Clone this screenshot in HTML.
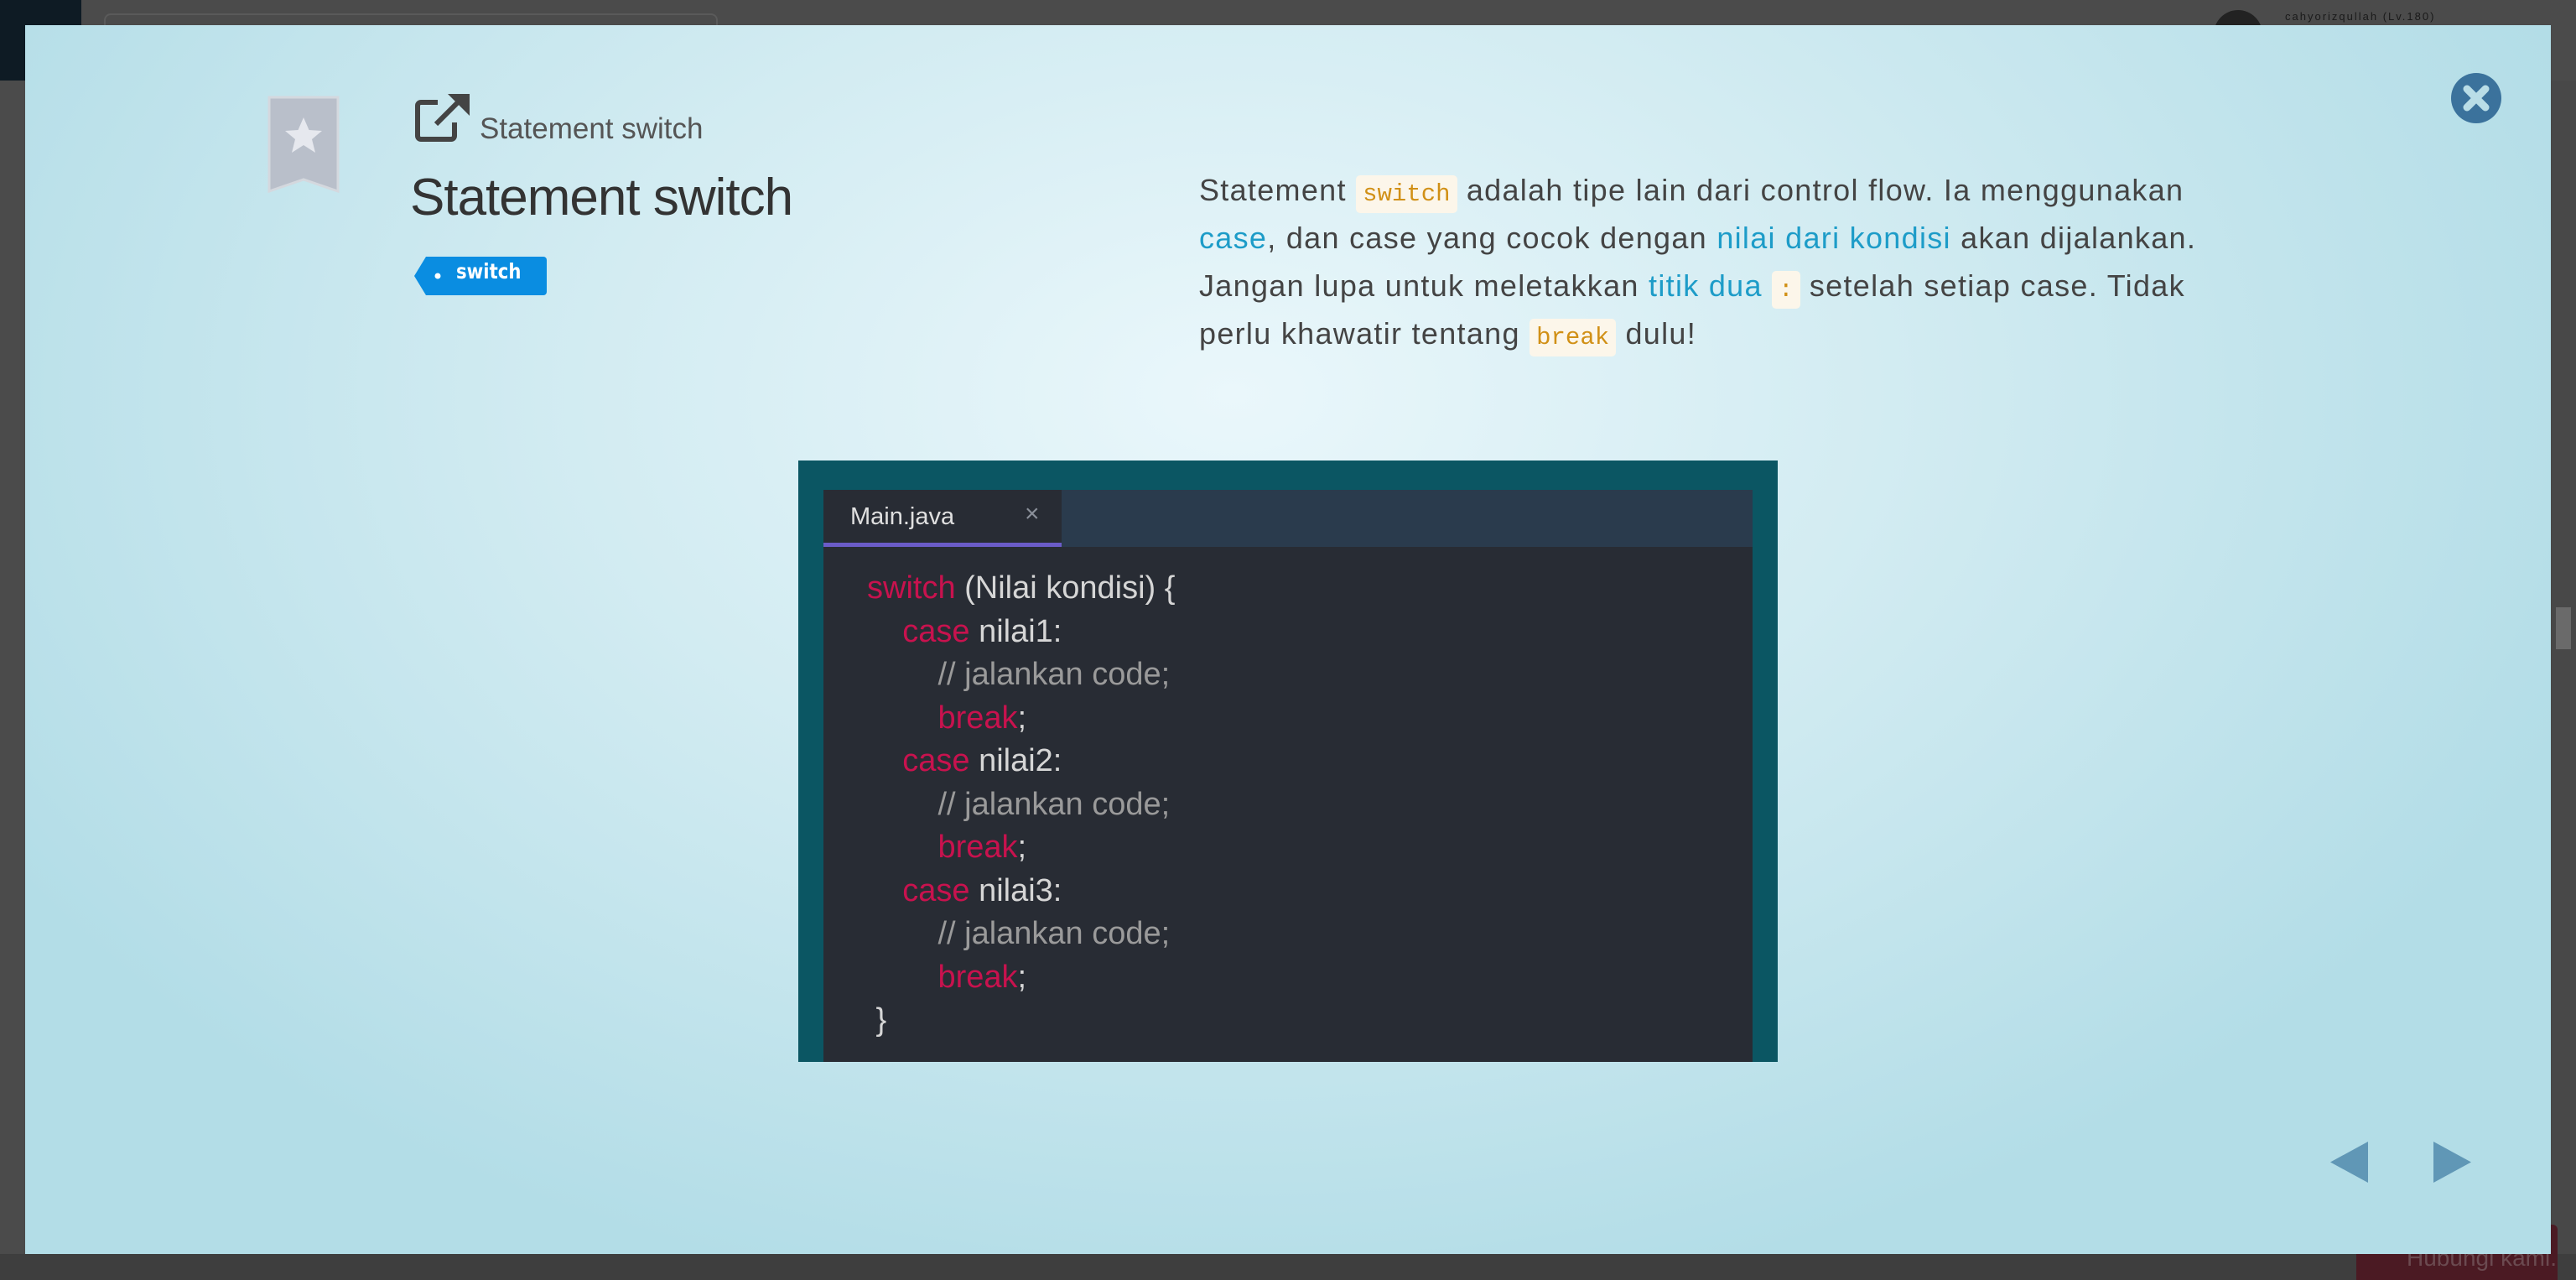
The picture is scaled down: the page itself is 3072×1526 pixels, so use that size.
<!DOCTYPE html>
<html><head><meta charset="utf-8"><style>
*{margin:0;padding:0;box-sizing:border-box}
html,body{width:3072px;height:1526px;overflow:hidden;background:#4b4b4b;font-family:"Liberation Sans",sans-serif}
.abs{position:absolute}
#modal{left:30px;top:30px;width:3012px;height:1465px;background:radial-gradient(ellipse 1700px 1100px at 1440px 440px,#eaf7fb 0%,#d3ecf2 45%,#b3dde7 100%);overflow:hidden}
.code{font-family:"Liberation Sans",sans-serif;font-size:38px;color:#d6d6d6;position:absolute;white-space:pre}
.kw{color:#c8124e}
.cm{color:#9a9a9a}
p.t{font-size:36px;color:#444;line-height:57px;letter-spacing:1.3px;white-space:nowrap}
.ic{font-family:"Liberation Mono",monospace;font-size:29px;line-height:1;color:#d19016;background:#fcf6ea;border-radius:5px;padding:6px 8px;letter-spacing:0}
.lk{color:#1d9cc8}
</style></head><body>
<div class="abs" style="left:0;top:0;width:97px;height:96px;background:#0e1b24"></div>
<div class="abs" style="left:124px;top:16px;width:732px;height:20px;border:2px solid #5a5a5a;border-bottom:none;border-radius:8px 8px 0 0"></div>
<div class="abs" style="left:2640px;top:12px;width:58px;height:58px;border-radius:50%;background:#222"></div>
<div class="abs" style="left:2725px;top:12px;font-size:13px;letter-spacing:2px;color:#1a1a1a">cahyorizqullah (Lv.180)</div>
<div class="abs" style="left:3042px;top:96px;width:30px;height:1430px;background:#484848"></div>
<div class="abs" style="left:3048px;top:724px;width:18px;height:50px;background:#6a6a6a"></div>
<div class="abs" style="left:0;top:1495px;width:3072px;height:31px;background:#3e3e3e"></div>
<div class="abs" style="left:2810px;top:1460px;width:240px;height:66px;background:#4b1a23;border-radius:6px 6px 0 0;color:#6b4a50;font-size:28px;padding:24px 0 0 60px;white-space:nowrap;overflow:hidden">Hubungi kami.</div>

<div id="modal" class="abs">
 <svg class="abs" style="left:289px;top:84px" width="86" height="116" viewBox="0 0 86 116">
  <path d="M2 2H84V114L43 100L2 114Z" fill="#b9bfca" stroke="#d4d8de" stroke-width="3"/>
  <path d="M43 26L49.5 41L65 42L53 52L57 68L43 59L29 68L33 52L21 42L36.5 41Z" fill="#e6e8ee"/>
 </svg>
 <svg class="abs" style="left:464px;top:80px" width="70" height="60" viewBox="0 0 70 60">
  <path d="M28 12H8a4 4 0 0 0-4 4v36a4 4 0 0 0 4 4h36a4 4 0 0 0 4-4V36" fill="none" stroke="#444" stroke-width="6" stroke-linejoin="round"/>
  <path d="M26 38L58 6" stroke="#444" stroke-width="6"/>
  <path d="M40 2H66V28Z" fill="#444"/>
 </svg>
 <div class="abs" style="left:542px;top:104px;font-size:35px;color:#555">Statement switch</div>
 <div class="abs" style="left:459px;top:170px;font-size:62px;color:#333;letter-spacing:-1px">Statement switch</div>
 <svg class="abs" style="left:462px;top:274px" width="162" height="50" viewBox="0 0 162 50">
  <path d="M16 2H156a4 4 0 0 1 4 4V44a4 4 0 0 1-4 4H16L2 25Z" fill="#0a8de1"/>
  <circle cx="30" cy="25" r="3.5" fill="#fff"/>
 </svg>
 <div class="abs" style="left:514px;top:279px;font-size:25px;color:#fff;font-weight:bold;font-family:'DejaVu Sans',sans-serif;transform:scaleX(.85);transform-origin:left">switch</div>

 <p class="t abs" style="left:1400px;top:168px">Statement <span class="ic">switch</span> adalah tipe lain dari control flow. Ia menggunakan<br><span class="lk">case</span>, dan case yang cocok dengan <span class="lk">nilai dari kondisi</span> akan dijalankan.<br>Jangan lupa untuk meletakkan <span class="lk">titik dua</span> <span class="ic">:</span> setelah setiap case. Tidak<br>perlu khawatir tentang <span class="ic">break</span> dulu!</p>

 <div class="abs" style="left:922px;top:519px;width:1168px;height:717px;background:#0b5663">
  <div class="abs" style="left:30px;top:35px;width:1108px;height:682px;background:#282c34">
   <div class="abs" style="left:0;top:0;width:1108px;height:68px;background:#2a3b4d"></div>
   <div class="abs" style="left:0;top:0;width:284px;height:68px;background:#282c34;border-bottom:5px solid #6b5cc8"></div>
   <div class="abs" style="left:32px;top:16px;font-size:29px;color:#e0e0e0">Main.java</div>
   <div class="abs" style="left:240px;top:12px;font-size:30px;color:#8a8f99">×</div>
   <div class="code" style="left:52px;top:92px;line-height:51.5px"><span class="kw">switch</span> (Nilai kondisi) {
    <span class="kw">case</span> nilai1:
        <span class="cm">// jalankan code;</span>
        <span class="kw">break</span>;
    <span class="kw">case</span> nilai2:
        <span class="cm">// jalankan code;</span>
        <span class="kw">break</span>;
    <span class="kw">case</span> nilai3:
        <span class="cm">// jalankan code;</span>
        <span class="kw">break</span>;
 }</div>
  </div>
 </div>

 <svg class="abs" style="left:2892px;top:56px" width="62" height="62" viewBox="0 0 62 62">
  <circle cx="31" cy="31" r="30" fill="#3b729c"/>
  <path d="M20 20L42 42M42 20L20 42" stroke="#b9dde7" stroke-width="9" stroke-linecap="round"/>
 </svg>
 <svg class="abs" style="left:2749px;top:1331px" width="45" height="49"><path d="M0 24.5L45 0V49Z" fill="#6097b6"/></svg>
 <svg class="abs" style="left:2872px;top:1331px" width="45" height="49"><path d="M45 24.5L0 0V49Z" fill="#6097b6"/></svg>
</div>
</body></html>
